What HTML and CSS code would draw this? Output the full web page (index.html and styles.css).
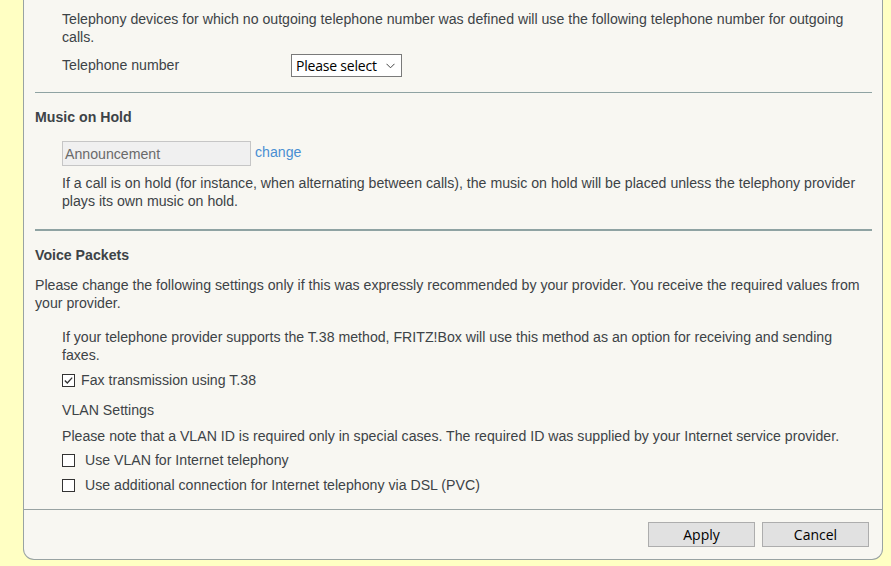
FILE: index.html
```html
<!DOCTYPE html>
<html>
<head>
<meta charset="utf-8">
<link rel="stylesheet" href="styles.css">
</head>
<body>
<div class="panel">
  <div class="content">
    <div class="indent">
      <p class="text first">Telephony devices for which no outgoing telephone number was defined will use the following telephone number for outgoing calls.</p>
      <div class="formrow">
        <label class="label">Telephone number</label>
        <div class="select">Please select <svg class="chev" width="9" height="6" viewBox="0 0 9 6"><path d="M0.5 0.8 L4.5 4.8 L8.5 0.8" fill="none" stroke="#444" stroke-width="1"/></svg></div>
      </div>
    </div>
    <hr class="sep thin">
    <h2 class="heading">Music on Hold</h2>
    <div class="indent">
      <div class="inputrow">
        <div class="input">Announcement</div>
        <a class="link">change</a>
      </div>
      <p class="text hold">If a call is on hold (for instance, when alternating between calls), the music on hold will be placed unless the telephony provider plays its own music on hold.</p>
    </div>
    <hr class="sep thick">
    <h2 class="heading">Voice Packets</h2>
    <p class="text intro">Please change the following settings only if this was expressly recommended by your provider. You receive the required values from your provider.</p>
    <div class="indent">
      <p class="text t38">If your telephone provider supports the T.38 method, FRITZ!Box will use this method as an option for receiving and sending faxes.</p>
      <div class="check fax">
        <span class="box checked"><svg width="11" height="11" viewBox="0 0 11 11"><path d="M1.8 5.5 L4.3 8 L9.2 2.6" fill="none" stroke="#333" stroke-width="1.3"/></svg></span>
        <span class="checklabel">Fax transmission using T.38</span>
      </div>
      <div class="text sub">VLAN Settings</div>
      <p class="text note">Please note that a VLAN ID is required only in special cases. The required ID was supplied by your Internet service provider.</p>
      <div class="check c1">
        <span class="box"></span>
        <span class="checklabel wide">Use VLAN for Internet telephony</span>
      </div>
      <div class="check c2">
        <span class="box"></span>
        <span class="checklabel wide">Use additional connection for Internet telephony via DSL (PVC)</span>
      </div>
    </div>
  </div>
  <div class="footer">
    <button class="btn">Apply</button>
    <button class="btn">Cancel</button>
  </div>
</div>
</body>
</html>
```
FILE: styles.css
```css
html, body {
  margin: 0;
  padding: 0;
}
body {
  background: #ffffc3;
  font-family: "Liberation Sans", Arial, sans-serif;
  font-size: 14.15px;
  color: #3d4347;
  height: 566px;
  overflow: hidden;
}
.panel {
  margin-left: 23px;
  width: 858px;
  height: 559px;
  background: #f8f7f2;
  border: 1px solid #99a3a3;
  border-top: none;
  border-radius: 0 0 11px 11px;
  display: flex;
  flex-direction: column;
}
.content {
  padding: 10px 10px 0 11px;
  flex: 1;
}
.indent {
  padding-left: 27px;
}
.text {
  margin: 0;
  line-height: 18px;
}
.formrow {
  display: flex;
  align-items: center;
  margin-top: 8px;
  height: 22px;
}
.label {
  width: 229px;
}
.select {
  box-sizing: border-box;
  height: 23px;
  width: 111px;
  border: 1px solid #7a7a7a;
  background: #fff;
  font-family: "Open Sans", "Noto Sans", sans-serif;
  font-size: 14px;
  color: #000;
  display: flex;
  align-items: center;
  padding-left: 4px;
  gap: 9px;
  letter-spacing: -0.2px;
}
.chev {
  margin-top: 1px;
}
.sep {
  border: none;
  margin: 0;
}
.sep.thin {
  margin-top: 16px;
  border-top: 1px solid #8fa3a3;
}
.sep.thick {
  margin-top: 19px;
  border-top: 2px solid #8fa3a3;
}
.heading {
  margin: 15px 0 0 0;
  font-size: 14.15px;
  font-weight: bold;
  line-height: 18px;
  color: #3d4347;
}
.inputrow {
  display: flex;
  align-items: center;
  margin-top: 15px;
  gap: 4px;
}
.input {
  box-sizing: border-box;
  width: 189px;
  height: 25px;
  border: 1px solid #c6c6c6;
  background: #f0f0f0;
  color: #6a6a6a;
  display: flex;
  align-items: center;
  padding-left: 2px;
  font-size: 14.15px;
}
.link {
  color: #4a8fd3;
  font-size: 14.15px;
  margin-top: -3px;
}
.hold {
  margin-top: 8px;
}
.intro {
  margin-top: 12px;
}
.t38 {
  margin-top: 16px;
}
.check {
  display: flex;
  align-items: center;
  height: 18px;
}
.fax {
  margin-top: 7px;
}
.box {
  box-sizing: border-box;
  width: 13px;
  height: 13px;
  border: 1px solid #333;
  background: #fff;
  display: flex;
  align-items: center;
  justify-content: center;
  flex-shrink: 0;
}
.checklabel {
  margin-left: 6px;
}
.checklabel.wide {
  margin-left: 10px;
}
.sub {
  margin-top: 12px;
}
.note {
  margin-top: 8px;
}
.c1 {
  margin-top: 6px;
}
.c2 {
  margin-top: 7px;
}
.footer {
  border-top: 1px solid #99a3a3;
  height: 50px;
  display: flex;
  justify-content: flex-end;
  align-items: flex-start;
  padding: 12px 13px 0 0;
  box-sizing: border-box;
  gap: 7px;
}
.btn {
  box-sizing: border-box;
  width: 107px;
  height: 25px;
  background: #e1e1e1;
  border: 1px solid #adadad;
  font-family: "Open Sans", "Noto Sans", sans-serif;
  font-size: 14px;
  color: #000;
  padding: 0;
  margin: 0;
}
```
